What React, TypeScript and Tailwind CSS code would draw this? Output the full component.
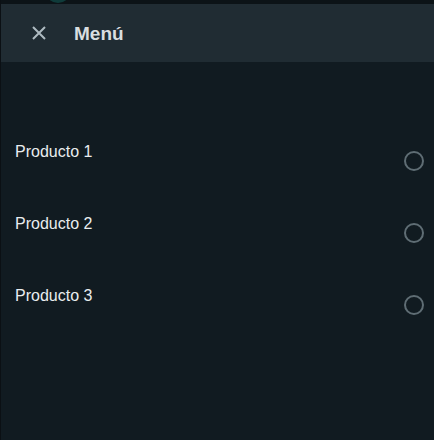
import React from "react";

const items = ["Producto 1", "Producto 2", "Producto 3"];

export default function App() {
  return (
    <div
      className="w-[434px] h-[440px] bg-[#111b21] flex flex-col border-l border-[#0b1014] overflow-hidden"
      style={{ fontFamily: '"Liberation Sans", Arial, sans-serif' }}
    >
      <div className="h-[4px] bg-[#0c1317] overflow-hidden shrink-0 pl-[44px]">
        <div className="w-[26px] h-[26px] rounded-full bg-[#0f3b3a] -mt-[23px]" />
      </div>
      <div className="h-[58px] bg-[#202c33] flex items-center shrink-0">
        <div className="w-[73px] flex items-center pl-[30px]">
          <svg width="16" height="16" viewBox="0 0 16 16" fill="none">
            <path d="M2 2 L14 14 M14 2 L2 14" stroke="#aebac1" strokeWidth="2" strokeLinecap="butt" />
          </svg>
        </div>
        <span className="text-[19px] font-bold text-[#d9dee0] leading-none">Menú</span>
      </div>
      <div className="flex flex-col pt-[76px]">
        {items.map((it) => (
          <div key={it} className="h-[72px] flex items-start justify-between pl-[14px] pr-[10px]">
            <span className="text-[16px] leading-[24px] text-[#e9edef] mt-[2px]">{it}</span>
            <div className="w-5 h-5 rounded-full border-2 border-[#5f6d74] mt-[13px]" />
          </div>
        ))}
      </div>
    </div>
  );
}
